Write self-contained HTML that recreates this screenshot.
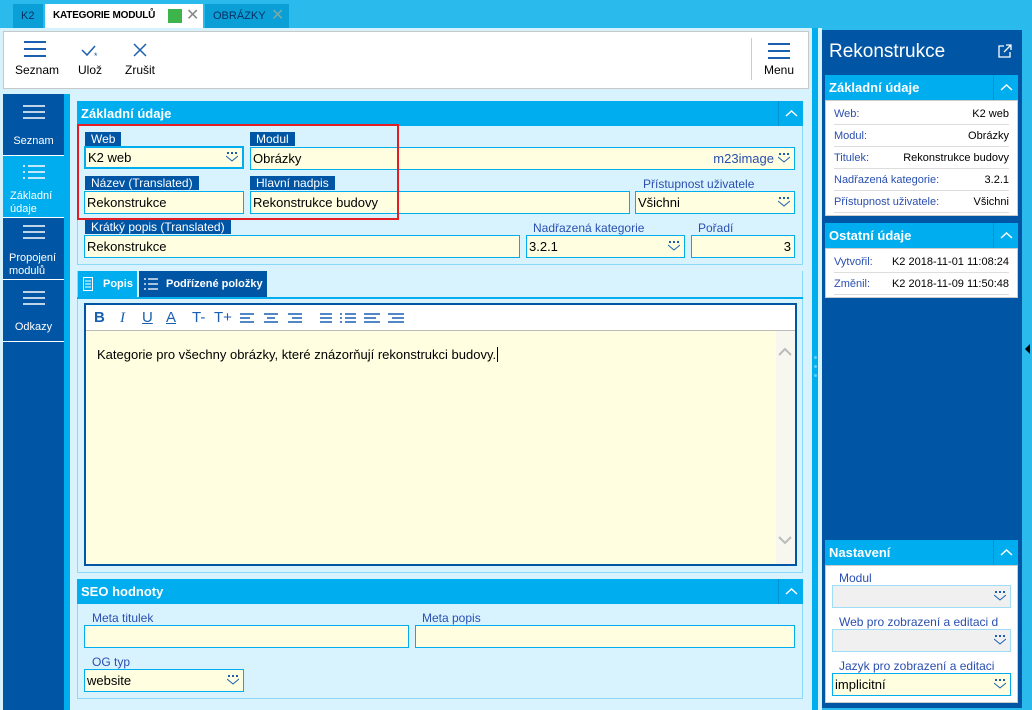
<!DOCTYPE html>
<html><head><meta charset="utf-8"><style>
*{box-sizing:border-box;margin:0;padding:0}
body{width:1032px;height:710px;overflow:hidden;background:#2bbaec;font-family:"Liberation Sans",sans-serif;font-size:12px;color:#000;position:relative}
.a{position:absolute}
.tab{position:absolute;top:4px;height:24px;line-height:24px;font-size:11px;padding-left:8px}
.lbl{position:absolute;height:14px;line-height:14px;background:#0055a5;color:#fff;padding:0 6px;font-size:12px}
.plbl{position:absolute;color:#2a4fb0;font-size:12px;line-height:14px}
.inp{position:absolute;height:23px;background:#fffee0;border:1px solid #00adef;line-height:21px;padding-left:2px;font-size:13px}
.ph{position:absolute;height:25px;background:#00adef;color:#fff;font-weight:bold;font-size:13px;line-height:25px;padding-left:4px}
.col{position:absolute;right:0;top:0;width:25px;height:25px;border-left:1px solid #0093d0}
.nav{position:absolute;left:3px;width:61px;background:#0055a5;color:#fff;text-align:center;font-size:11px;line-height:13px}
.dd{position:absolute;right:4px;top:5px}
.rl{position:absolute;left:8px;right:8px;height:22px;border-bottom:1px solid #ddd;line-height:22px;font-size:11px}
.rl span{color:#2a4fb0}
.rl b{font-weight:normal;position:absolute;right:0}
</style></head><body>
<!-- tabs -->
<div class="tab" style="left:13px;width:30px;background:#0a9fd6;color:#063063">K2</div>
<div class="tab" style="left:45px;width:158px;background:#fff;font-weight:bold;color:#000;font-size:10px;letter-spacing:-0.2px">KATEGORIE MODULŮ<span class="a" style="left:123px;top:5px;width:14px;height:14px;background:#3db54a"></span><span class="a" style="left:141px;top:0;color:#888;font-size:16px;font-weight:normal">✕</span></div>
<div class="tab" style="left:205px;width:84px;background:#0a9fd6;color:#063063">OBRÁZKY<span class="a" style="left:66px;top:0;color:#7aa;font-size:16px">✕</span></div>
<!-- main bg -->
<div class="a" style="left:0;top:28px;width:822px;height:682px;background:#d6f2fd"></div>
<!-- toolbar -->
<div class="a" style="left:3px;top:31px;width:806px;height:58px;background:#fff;border:1px solid #c8c8c8"></div>
<svg class="a" style="left:24px;top:40px" width="24" height="20"><g stroke="#1a5fb0" stroke-width="2"><line x1="0" y1="2" x2="22" y2="2"/><line x1="0" y1="9" x2="22" y2="9"/><line x1="0" y1="16" x2="22" y2="16"/></g></svg>
<div class="a" style="left:15px;top:63px;font-size:12px">Seznam</div>
<svg class="a" style="left:81px;top:44px" width="20" height="16"><path d="M1 6 L6 11 L14 2" stroke="#1a5fb0" stroke-width="1.5" fill="none"/><text x="13" y="15" font-size="9" fill="#1a5fb0">*</text></svg>
<div class="a" style="left:78px;top:63px">Ulož</div>
<svg class="a" style="left:132px;top:42px" width="16" height="16"><path d="M2 2L14 14M14 2L2 14" stroke="#1a5fb0" stroke-width="1.5"/></svg>
<div class="a" style="left:125px;top:63px">Zrušit</div>
<div class="a" style="left:751px;top:38px;width:1px;height:42px;background:#ccc"></div>
<svg class="a" style="left:768px;top:42px" width="24" height="20"><g stroke="#1a5fb0" stroke-width="2"><line x1="0" y1="2" x2="22" y2="2"/><line x1="0" y1="9" x2="22" y2="9"/><line x1="0" y1="16" x2="22" y2="16"/></g></svg>
<div class="a" style="left:764px;top:63px">Menu</div>
<!-- left nav -->
<div class="a" style="left:3px;top:94px;width:61px;height:616px;background:#0055a5"></div>
<div class="a" style="left:64px;top:94px;width:6px;height:616px;background:#00adef"></div>
<div class="nav" style="top:94px;height:61px"><svg style="margin-top:10px" width="22" height="16"><g stroke="#fff" stroke-width="1.5"><line x1="0" y1="2" x2="22" y2="2"/><line x1="0" y1="8" x2="22" y2="8"/><line x1="0" y1="14" x2="22" y2="14"/></g></svg><div style="margin-top:11px">Seznam</div></div>
<div class="nav" style="top:156px;height:61px;background:#00adef"><svg style="margin-top:8px" width="22" height="16"><g stroke="#fff" stroke-width="1.5"><line x1="0" y1="2" x2="2" y2="2"/><line x1="5" y1="2" x2="22" y2="2"/><line x1="0" y1="8" x2="2" y2="8"/><line x1="5" y1="8" x2="22" y2="8"/><line x1="0" y1="14" x2="2" y2="14"/><line x1="5" y1="14" x2="22" y2="14"/></g></svg><div style="margin-top:6px;text-align:left;padding-left:7px">Základní<br>údaje</div></div>
<div class="nav" style="top:218px;height:61px"><svg style="margin-top:6px" width="22" height="16"><g stroke="#fff" stroke-width="1.5"><line x1="0" y1="2" x2="22" y2="2"/><line x1="0" y1="8" x2="22" y2="8"/><line x1="0" y1="14" x2="22" y2="14"/></g></svg><div style="margin-top:8px;text-align:left;padding-left:6px">Propojení<br>modulů</div></div>
<div class="nav" style="top:280px;height:61px"><svg style="margin-top:10px" width="22" height="16"><g stroke="#fff" stroke-width="1.5"><line x1="0" y1="2" x2="22" y2="2"/><line x1="0" y1="8" x2="22" y2="8"/><line x1="0" y1="14" x2="22" y2="14"/></g></svg><div style="margin-top:11px">Odkazy</div></div>
<div class="a" style="left:3px;top:155px;width:61px;height:1px;background:#fff"></div>
<div class="a" style="left:3px;top:217px;width:61px;height:1px;background:#fff"></div>
<div class="a" style="left:3px;top:279px;width:61px;height:1px;background:#fff"></div>
<div class="a" style="left:3px;top:341px;width:61px;height:1px;background:#fff"></div>
<!-- main area -->
<div class="a" style="left:70px;top:94px;width:738px;height:616px;background:#d9f3fe"></div>
<!-- panel 1 -->
<div class="a" style="left:77px;top:101px;width:726px;height:164px;border:1px solid #8ad9f6"></div>
<div class="ph" style="left:77px;top:101px;width:726px">Základní údaje<div class="col"><svg width="25" height="25"><path d="M7 15L12.5 10L18 15" stroke="#fff" stroke-width="1.5" fill="none"/></svg></div></div>
<div class="lbl" style="left:85px;top:132px">Web</div>
<div class="inp" style="left:84px;top:146px;width:160px;border:2px solid #00adef;line-height:19px">K2 web<svg class="dd" width="12" height="10" style="top:4px"><g fill="#1a5fb0"><rect x="1" y="0" width="2" height="2"/><rect x="5" y="0" width="2" height="2"/><rect x="9" y="0" width="2" height="2"/></g><path d="M0 4L6 9L12 4" stroke="#1a5fb0" fill="none"/></svg></div>
<div class="lbl" style="left:250px;top:132px">Modul</div>
<div class="inp" style="left:250px;top:147px;width:545px">Obrázky<span class="a" style="right:20px;top:0;color:#2a4fb0">m23image</span><svg class="dd" width="12" height="10"><g fill="#1a5fb0"><rect x="1" y="0" width="2" height="2"/><rect x="5" y="0" width="2" height="2"/><rect x="9" y="0" width="2" height="2"/></g><path d="M0 4L6 9L12 4" stroke="#1a5fb0" fill="none"/></svg></div>
<div class="lbl" style="left:85px;top:176px">Název (Translated)</div>
<div class="inp" style="left:84px;top:191px;width:160px">Rekonstrukce</div>
<div class="lbl" style="left:250px;top:176px">Hlavní nadpis</div>
<div class="inp" style="left:250px;top:191px;width:380px">Rekonstrukce budovy</div>
<div class="plbl" style="left:643px;top:177px">Přístupnost uživatele</div>
<div class="inp" style="left:635px;top:191px;width:160px">Všichni<svg class="dd" width="12" height="10"><g fill="#1a5fb0"><rect x="1" y="0" width="2" height="2"/><rect x="5" y="0" width="2" height="2"/><rect x="9" y="0" width="2" height="2"/></g><path d="M0 4L6 9L12 4" stroke="#1a5fb0" fill="none"/></svg></div>
<div class="lbl" style="left:85px;top:220px">Krátký popis (Translated)</div>
<div class="inp" style="left:84px;top:235px;width:436px">Rekonstrukce</div>
<div class="plbl" style="left:533px;top:221px">Nadřazená kategorie</div>
<div class="inp" style="left:526px;top:235px;width:159px">3.2.1<svg class="dd" width="12" height="10"><g fill="#1a5fb0"><rect x="1" y="0" width="2" height="2"/><rect x="5" y="0" width="2" height="2"/><rect x="9" y="0" width="2" height="2"/></g><path d="M0 4L6 9L12 4" stroke="#1a5fb0" fill="none"/></svg></div>
<div class="plbl" style="left:698px;top:221px">Pořadí</div>
<div class="inp" style="left:691px;top:235px;width:104px;text-align:right;padding-right:3px">3</div>
<div class="a" style="left:77px;top:124px;width:322px;height:96px;border:2px solid #e31e24"></div>
<!-- tabs panel -->
<div class="a" style="left:77px;top:271px;width:726px;height:302px;border:1px solid #8ad9f6;border-top:none"></div>
<div class="a" style="left:78px;top:271px;width:59px;height:26px;background:#00adef;color:#fff;font-weight:bold;font-size:11px;line-height:26px;padding-left:25px">Popis<svg class="a" style="left:5px;top:6px" width="10" height="14"><rect x="0.5" y="0.5" width="9" height="13" fill="none" stroke="#fff"/><g stroke="#fff"><line x1="2" y1="4" x2="8" y2="4"/><line x1="2" y1="7" x2="8" y2="7"/><line x1="2" y1="10" x2="8" y2="10"/></g></svg></div>
<div class="a" style="left:139px;top:271px;width:128px;height:26px;background:#0055a5;color:#fff;font-weight:bold;font-size:11px;line-height:26px;padding-left:27px">Podřízené položky<svg class="a" style="left:5px;top:7px" width="14" height="12"><g stroke="#fff" stroke-width="1.3"><line x1="0" y1="1" x2="2" y2="1"/><line x1="4" y1="1" x2="14" y2="1"/><line x1="0" y1="6" x2="2" y2="6"/><line x1="4" y1="6" x2="14" y2="6"/><line x1="0" y1="11" x2="2" y2="11"/><line x1="4" y1="11" x2="14" y2="11"/></g></svg></div>
<div class="a" style="left:77px;top:297px;width:726px;height:2px;background:#00adef"></div>
<div class="a" style="left:84px;top:303px;width:713px;height:263px;border:2px solid #0055a5;background:#fffee0"></div>
<div class="a" style="left:86px;top:305px;width:709px;height:26px;background:#fff;border-bottom:1px solid #bbb;color:#1a5fb0;font-size:15px;line-height:26px">
<span class="a" style="left:8px;font-weight:bold">B</span><span class="a" style="left:34px;font-style:italic;font-family:'Liberation Serif'">I</span><span class="a" style="left:56px;text-decoration:underline">U</span><span class="a" style="left:80px;text-decoration:underline">A</span>
<span class="a" style="left:106px">T-</span><span class="a" style="left:128px">T+</span>
<svg class="a" style="left:154px;top:8px" width="170" height="12"><g stroke="#1a5fb0" stroke-width="1.5"><path d="M0 1H14M0 5H10M0 9H14"/><path d="M24 1H38M27 5H35M24 9H38"/><path d="M48 1H62M52 5H62M48 9H62"/><path d="M80 1H92M80 5H92M80 9H92"/><path d="M100 1H102M105 1H116M100 5H102M105 5H116M100 9H102M105 9H116"/><path d="M124 1H140M124 5H136M124 9H140"/><path d="M148 1H164M152 5H164M148 9H164"/></g></svg>
</div>
<div class="a" style="left:97px;top:347px;font-size:13px">Kategorie pro všechny obrázky, které znázorňují rekonstrukci budovy.<span style="border-left:1px solid #000;margin-left:1px"></span></div>
<div class="a" style="left:776px;top:331px;width:19px;height:233px;background:#f7f7f0"></div>
<svg class="a" style="left:778px;top:347px" width="14" height="10"><path d="M1 8L7 2L13 8" stroke="#bbb" stroke-width="2" fill="none"/></svg>
<svg class="a" style="left:778px;top:535px" width="14" height="10"><path d="M1 2L7 8L13 2" stroke="#bbb" stroke-width="2" fill="none"/></svg>
<!-- SEO -->
<div class="a" style="left:77px;top:579px;width:726px;height:120px;border:1px solid #8ad9f6"></div>
<div class="ph" style="left:77px;top:579px;width:726px">SEO hodnoty<div class="col"><svg width="25" height="25"><path d="M7 15L12.5 10L18 15" stroke="#fff" stroke-width="1.5" fill="none"/></svg></div></div>
<div class="plbl" style="left:92px;top:611px">Meta titulek</div>
<div class="inp" style="left:84px;top:625px;width:325px"></div>
<div class="plbl" style="left:422px;top:611px">Meta popis</div>
<div class="inp" style="left:415px;top:625px;width:380px"></div>
<div class="plbl" style="left:92px;top:655px">OG typ</div>
<div class="inp" style="left:84px;top:669px;width:160px">website<svg class="dd" width="12" height="10"><g fill="#1a5fb0"><rect x="1" y="0" width="2" height="2"/><rect x="5" y="0" width="2" height="2"/><rect x="9" y="0" width="2" height="2"/></g><path d="M0 4L6 9L12 4" stroke="#1a5fb0" fill="none"/></svg></div>
<!-- splitter -->
<div class="a" style="left:812px;top:28px;width:6px;height:682px;background:#00adef"></div>
<div class="a" style="left:814px;top:356px;width:3px;height:3px;border-radius:2px;background:#5fd0f7;box-shadow:0 9px 0 #5fd0f7,0 18px 0 #5fd0f7"></div>
<div class="a" style="left:818px;top:28px;width:4px;height:682px;background:#d6f2fd"></div>
<!-- right panel -->
<div class="a" style="left:822px;top:30px;width:200px;height:678px;background:#0055a5"></div>
<div class="a" style="left:829px;top:41px;color:#fff;font-size:19px">Rekonstrukce</div>
<svg class="a" style="left:998px;top:44px" width="14" height="14"><path d="M6 2H1V13H12V8" stroke="#fff" fill="none" stroke-width="1.3"/><path d="M8 1H13V6M13 1L6 8" stroke="#fff" fill="none" stroke-width="1.3"/></svg>
<svg class="a" style="left:1025px;top:344px" width="5" height="10"><path d="M5 0L0 5L5 10Z" fill="#000"/></svg>
<div class="ph" style="left:825px;top:75px;width:193px;font-size:13px">Základní údaje<div class="col"><svg width="25" height="25"><path d="M7 15L12.5 10L18 15" stroke="#fff" stroke-width="1.5" fill="none"/></svg></div></div>
<div class="a" style="left:825px;top:100px;width:193px;height:116px;background:#fff;border:1px solid #ccc">
<div class="rl" style="top:2px"><span>Web:</span><b>K2 web</b></div>
<div class="rl" style="top:24px"><span>Modul:</span><b>Obrázky</b></div>
<div class="rl" style="top:46px"><span>Titulek:</span><b>Rekonstrukce budovy</b></div>
<div class="rl" style="top:68px"><span>Nadřazená kategorie:</span><b>3.2.1</b></div>
<div class="rl" style="top:90px"><span>Přístupnost uživatele:</span><b>Všichni</b></div>
</div>
<div class="ph" style="left:825px;top:223px;width:193px">Ostatní údaje<div class="col"><svg width="25" height="25"><path d="M7 15L12.5 10L18 15" stroke="#fff" stroke-width="1.5" fill="none"/></svg></div></div>
<div class="a" style="left:825px;top:248px;width:193px;height:50px;background:#fff;border:1px solid #ccc">
<div class="rl" style="top:2px"><span>Vytvořil:</span><b><span style="color:#000">K2</span> 2018-11-01 11:08:24</b></div>
<div class="rl" style="top:24px"><span>Změnil:</span><b><span style="color:#000">K2</span> 2018-11-09 11:50:48</b></div>
</div>
<div class="ph" style="left:825px;top:540px;width:193px">Nastavení<div class="col"><svg width="25" height="25"><path d="M7 15L12.5 10L18 15" stroke="#fff" stroke-width="1.5" fill="none"/></svg></div></div>
<div class="a" style="left:825px;top:565px;width:193px;height:138px;background:#fff;border:1px solid #ccc"></div>
<div class="plbl" style="left:839px;top:571px">Modul</div>
<div class="inp" style="left:832px;top:585px;width:179px;background:#f0f0f0;border-color:#9fdcf5"><svg class="dd" width="12" height="10"><g fill="#1a5fb0"><rect x="1" y="0" width="2" height="2"/><rect x="5" y="0" width="2" height="2"/><rect x="9" y="0" width="2" height="2"/></g><path d="M0 4L6 9L12 4" stroke="#1a5fb0" fill="none"/></svg></div>
<div class="plbl" style="left:839px;top:615px">Web pro zobrazení a editaci d</div>
<div class="inp" style="left:832px;top:629px;width:179px;background:#f0f0f0;border-color:#9fdcf5"><svg class="dd" width="12" height="10"><g fill="#1a5fb0"><rect x="1" y="0" width="2" height="2"/><rect x="5" y="0" width="2" height="2"/><rect x="9" y="0" width="2" height="2"/></g><path d="M0 4L6 9L12 4" stroke="#1a5fb0" fill="none"/></svg></div>
<div class="plbl" style="left:839px;top:659px">Jazyk pro zobrazení a editaci</div>
<div class="inp" style="left:832px;top:673px;width:179px">implicitní<svg class="dd" width="12" height="10"><g fill="#1a5fb0"><rect x="1" y="0" width="2" height="2"/><rect x="5" y="0" width="2" height="2"/><rect x="9" y="0" width="2" height="2"/></g><path d="M0 4L6 9L12 4" stroke="#1a5fb0" fill="none"/></svg></div>
</body></html>
